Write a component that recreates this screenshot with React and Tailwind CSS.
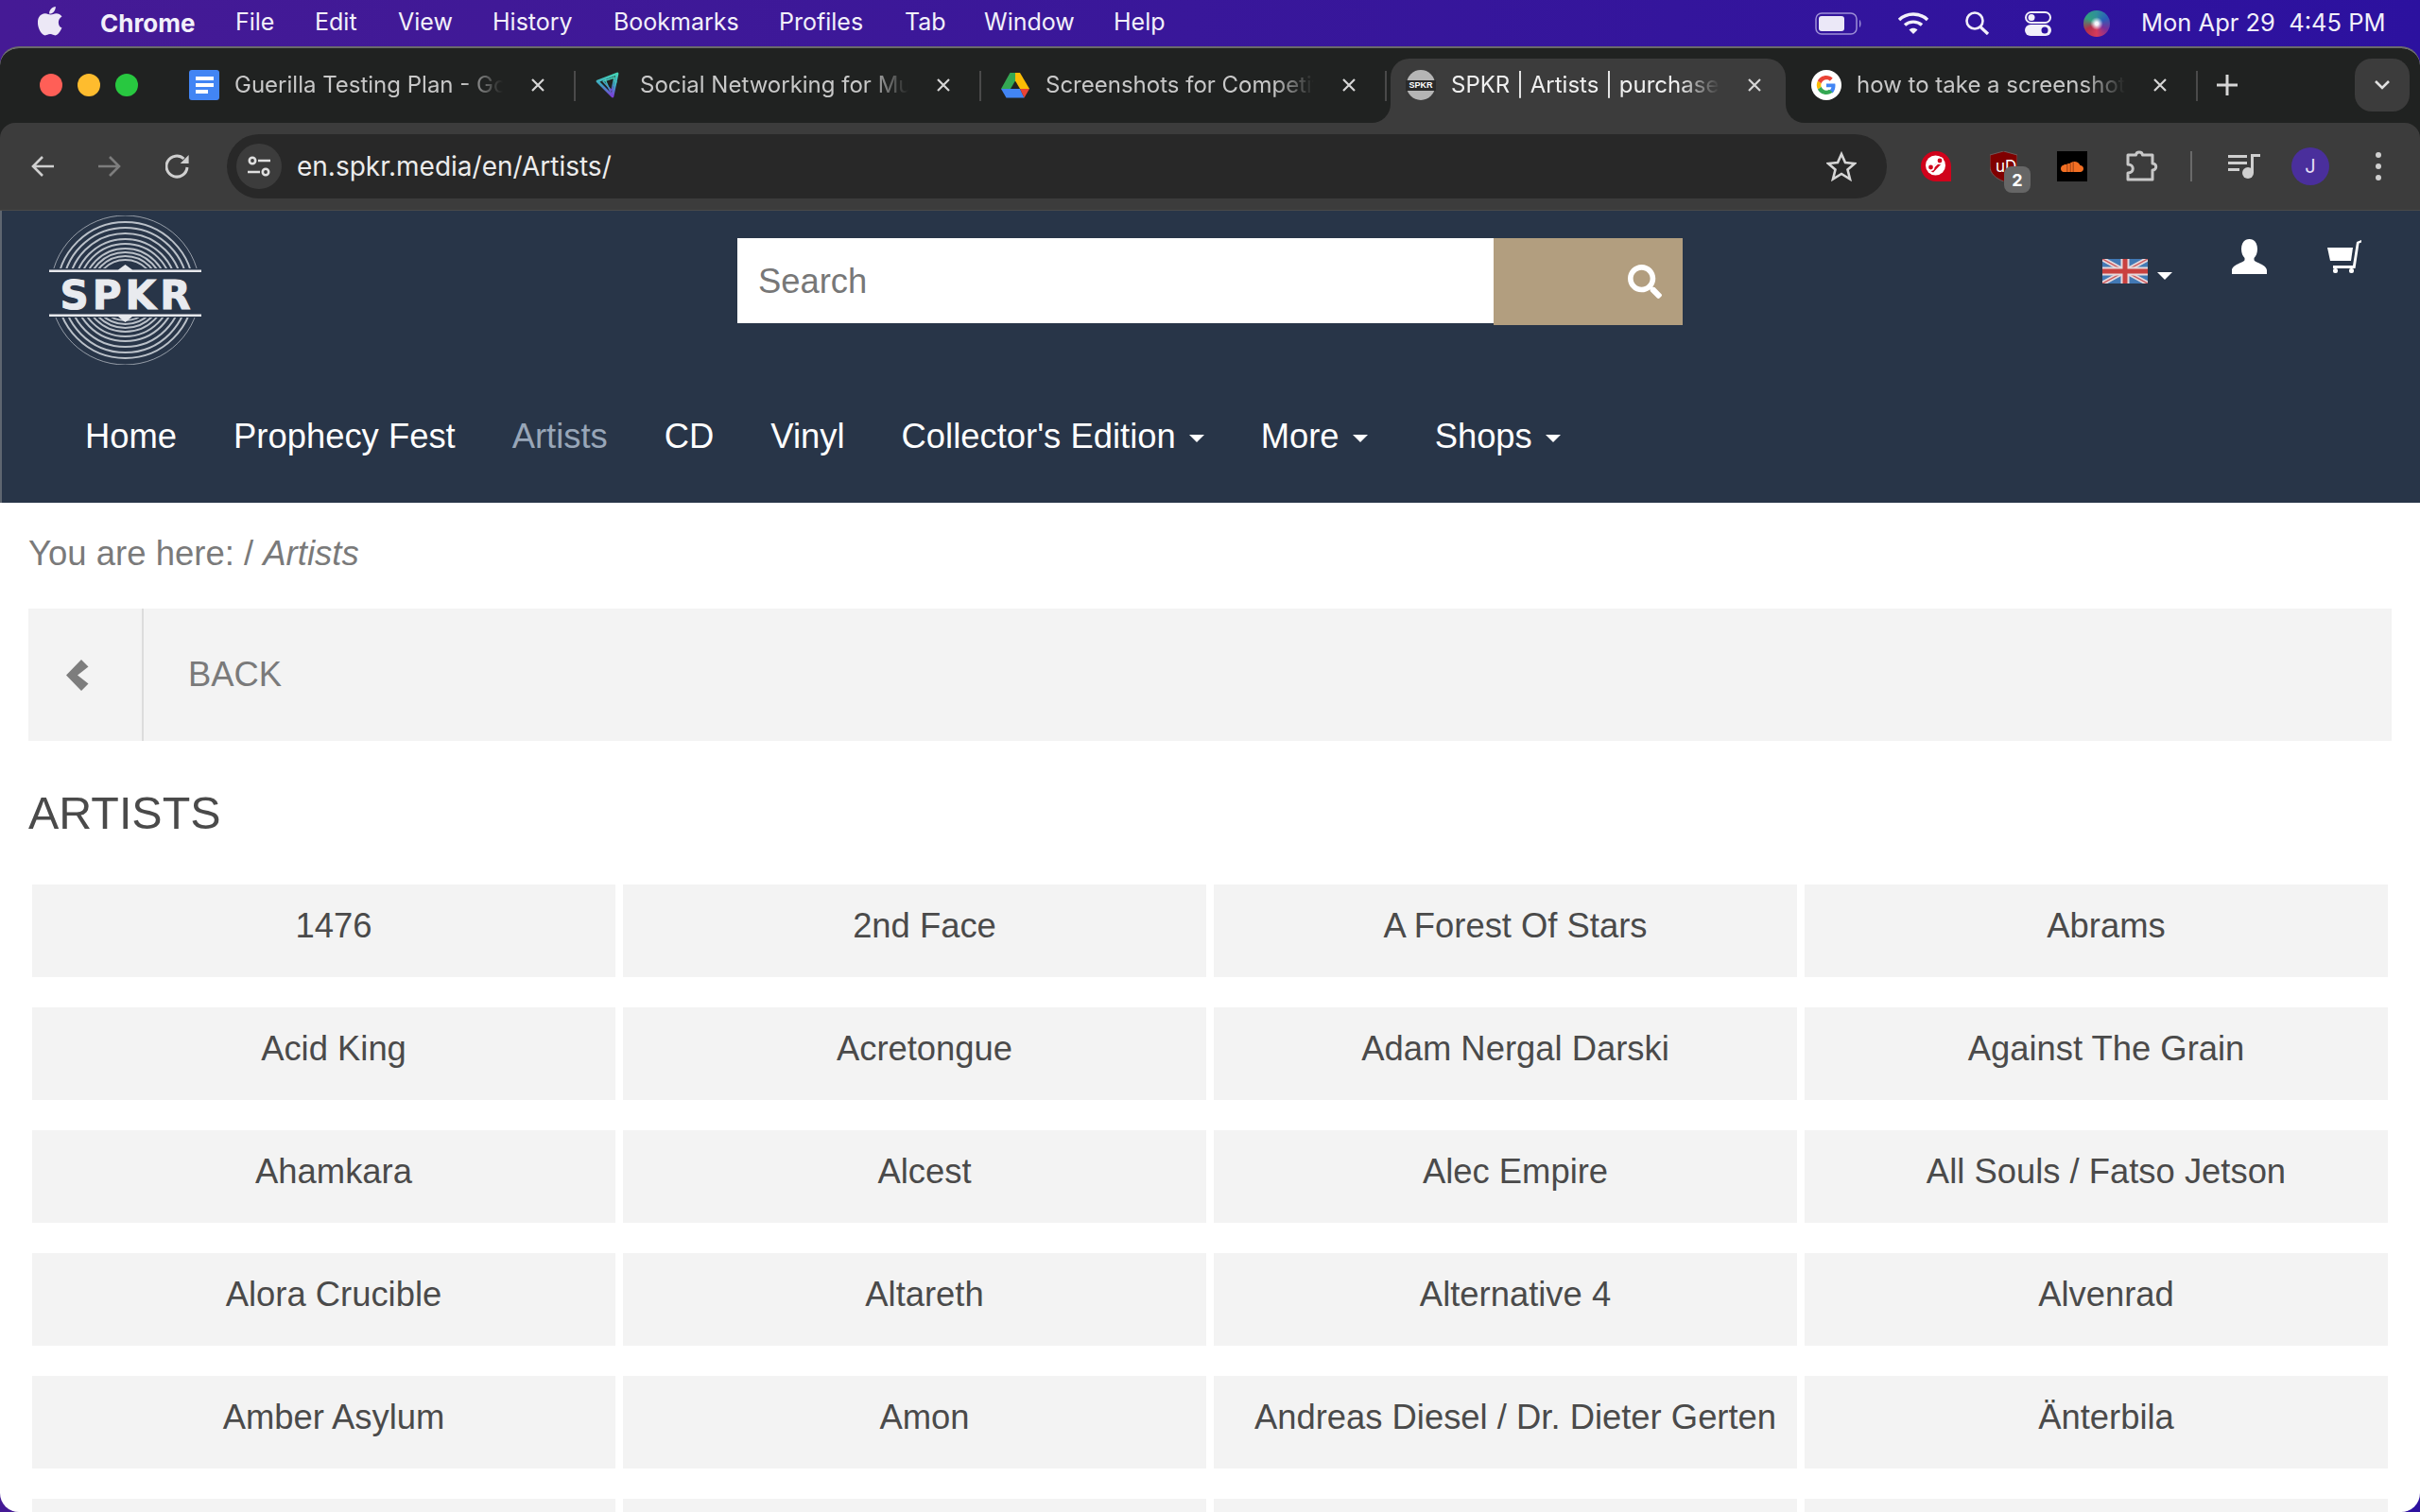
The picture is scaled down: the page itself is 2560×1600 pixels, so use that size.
import React from "react";
import { FaSearch } from "react-icons/fa";

const menuItems = [
  { label: "Chrome", w: 143, bold: true },
  { label: "File", w: 84 },
  { label: "Edit", w: 88 },
  { label: "View", w: 100 },
  { label: "History", w: 128 },
  { label: "Bookmarks", w: 175 },
  { label: "Profiles", w: 133 },
  { label: "Tab", w: 84 },
  { label: "Window", w: 137 },
  { label: "Help", w: 80 },
];

const navItems = [
  { label: "Home" },
  { label: "Prophecy Fest" },
  { label: "Artists", muted: true },
  { label: "CD" },
  { label: "Vinyl" },
  { label: "Collector's Edition", caret: true },
  { label: "More", caret: true },
  { label: "Shops", caret: true, extra: true },
];

const artists = [
  "1476", "2nd Face", "A Forest Of Stars", "Abrams",
  "Acid King", "Acretongue", "Adam Nergal Darski", "Against The Grain",
  "Ahamkara", "Alcest", "Alec Empire", "All Souls / Fatso Jetson",
  "Alora Crucible", "Altareth", "Alternative 4", "Alvenrad",
  "Amber Asylum", "Amon", "Andreas Diesel / Dr. Dieter Gerten", "Änterbila",
  "", "", "", "",
];

function DocsIcon() {
  return (
    <svg width="32" height="32" viewBox="0 0 32 32">
      <rect x="0" y="0" width="32" height="32" rx="3" fill="#4285f4" />
      <rect x="7" y="7" width="19" height="4" fill="#fff" />
      <rect x="7" y="14" width="19" height="4" fill="#fff" />
      <rect x="7" y="21" width="13" height="4" fill="#fff" />
    </svg>
  );
}

function SocialIcon() {
  return (
    <svg width="32" height="32" viewBox="0 0 32 32" fill="none" strokeLinejoin="round">
      <defs>
        <linearGradient id="socialGrad" x1="0" y1="0" x2="0" y2="1">
          <stop offset="0" stopColor="#45d6b5" />
          <stop offset="0.5" stopColor="#3f9fc4" />
          <stop offset="1" stopColor="#7a3fd8" />
        </linearGradient>
      </defs>
      <g stroke="url(#socialGrad)">
        <path d="M3 12 L24 4 L19 28 Z" strokeWidth="2.800" />
        <path d="M9 12 L21 8 L18 22 Z" strokeWidth="1.500" />
        <path d="M11 10 L18 26 M23 12 L18 26" strokeWidth="1.500" />
      </g>
    </svg>
  );
}

function DriveIcon() {
  return (
    <svg width="32" height="32" viewBox="0 0 32 32">
      <path d="M10.500 3 H16 V11.500 L11 20 H1 Z" fill="#34a853" />
      <path d="M16 3 H21 L31 20 H21 L16 11.500 Z" fill="#fbbc04" />
      <path d="M1 20 H21 L25.500 29.500 H6.500 Z" fill="#4285f4" />
      <path d="M21 20 H31 L25.500 29.500 Z" fill="#ea4335" />
    </svg>
  );
}

function SpkrFavicon() {
  return (
    <div className="relative flex h-[32px] w-[32px] items-center justify-center bg-[#3a3a3a]">
      <div className="h-[32px] w-[30px] rounded-full bg-[#b5b5b5]" />
      <span className="absolute w-full bg-[#2a2a2a] text-center text-[9px] leading-[11px] font-bold text-white [font-family:'Liberation_Sans',sans-serif]">
        SPKR
      </span>
    </div>
  );
}

function GoogleIcon() {
  return (
    <svg width="32" height="32" viewBox="0 0 32 32">
      <circle cx="16" cy="16" r="16" fill="#fff" />
      <path d="M25.500 16.500 c0-.8-.1-1.400-.2-2 H16 v3.800 h5.400 c-.2 1.300-1 2.600-2.400 3.400 l3.600 2.700 c2.100-2 2.900-4.800 2.900-7.900 z" fill="#4285f4" />
      <path d="M16 26 c2.800 0 5-.9 6.600-2.500 L19 20.700 c-.8.600-1.800 1-3 1 -2.500 0-4.600-1.700-5.400-4 L6.900 20.500 C8.500 23.800 12 26 16 26 z" fill="#34a853" />
      <path d="M10.600 17.700 c-.4-1.100-.4-2.300 0-3.400 L6.900 11.500 c-1.500 2.900-1.500 6.100 0 9 z" fill="#fbbc04" />
      <path d="M16 10.300 c1.500 0 2.700.5 3.700 1.400 l3-3 C20.900 7 18.700 6 16 6 12 6 8.500 8.200 6.900 11.500 l3.700 2.800 c.8-2.300 2.900-4 5.400-4 z" fill="#ea4335" />
    </svg>
  );
}

const tabs = [
  { title: "Guerilla Testing Plan - Google Docs", icon: <DocsIcon /> },
  { title: "Social Networking for Musicians", icon: <SocialIcon /> },
  { title: "Screenshots for Competitive", icon: <DriveIcon /> },
  { title: "SPKR | Artists | purchase online", icon: <SpkrFavicon />, active: true },
  { title: "how to take a screenshot on mac", icon: <GoogleIcon /> },
];

function CloseIcon() {
  return (
    <svg width="16" height="16" viewBox="0 0 16 16" stroke="#d6d6d6" strokeWidth="2.200" className="shrink-0">
      <path d="M2 2 L14 14 M14 2 L2 14" />
    </svg>
  );
}

function Tab({ tab }) {
  return (
    <div className="relative flex h-[68px] w-[429px] shrink-0 items-start">
      {tab.active && (
        <>
          <div className="absolute top-0 left-0 h-[68px] w-[418px] rounded-t-[20px] bg-[#3c3c3c]" />
          <div className="absolute bottom-0 left-[-20px] h-[20px] w-[20px] bg-[#3c3c3c]">
            <div className="h-full w-full rounded-br-[20px] bg-[#202221]" />
          </div>
          <div className="absolute bottom-0 left-[418px] h-[20px] w-[20px] bg-[#3c3c3c]">
            <div className="h-full w-full rounded-bl-[20px] bg-[#202221]" />
          </div>
        </>
      )}
      <div className="relative flex h-[56px] w-full items-center pl-[16px]">
        <div className="flex h-[32px] w-[32px] shrink-0 items-center justify-center">{tab.icon}</div>
        <span
          className={`ml-[16px] w-[287px] shrink-0 overflow-hidden text-[24px] whitespace-nowrap [mask-image:linear-gradient(to_right,black_84%,transparent_99%)] ${
            tab.active ? "text-[#f0f0f0]" : "text-[#c8c8c8]"
          }`}
        >
          {tab.title}
        </span>
        <div className="ml-[26px]">
          <CloseIcon />
        </div>
        {!tab.active && <div className="absolute top-[13px] left-[423px] h-[32px] w-[2px] bg-[#4a4a4a]" />}
      </div>
    </div>
  );
}

function AppleLogo() {
  return (
    <svg width="26" height="31" viewBox="0 0 26 31" fill="#ece8f6">
      <path d="M18.800 0 c.2 2-.6 3.900-1.700 5.300 -1.200 1.400-3.100 2.500-5 2.300 -.2-1.900.7-3.900 1.800-5.100 C15.100 1.100 17.200.1 18.800 0 z M25.500 22.300 c-.7 1.600-1 2.300-1.900 3.700 -1.300 2-3.100 4.400-5.300 4.400 -2 0-2.500-1.300-5.200-1.300 -2.700 0-3.300 1.300-5.300 1.300 -2.200 0-3.900-2.200-5.200-4.200 C-.5 20.800-.9 14.300 1.300 11 c1.600-2.400 4.100-3.700 6.500-3.700 2.400 0 3.900 1.300 5.900 1.300 1.900 0 3.100-1.300 5.900-1.300 2.100 0 4.300 1.100 5.900 3.100 -5.200 2.900-4.300 10.200-.5 11.900 z" />
    </svg>
  );
}

function StatusIcons() {
  return (
    <div className="flex items-center">
      <svg width="50" height="24" viewBox="0 0 50 24" fill="none">
        <rect x="1" y="1" width="43" height="22" rx="6" stroke="#9d8fd6" strokeWidth="1.500" />
        <rect x="4" y="4" width="27" height="16" rx="3" fill="#ebe8f7" />
        <path d="M47 8 c2 1 2 7 0 8 z" fill="#9d8fd6" />
      </svg>
      <svg width="34" height="24" viewBox="0 0 34 24" fill="none" stroke="#f2f0fa" strokeWidth="3.400" className="ml-[37px]">
        <path d="M2 8 C10 0 24 0 32 8" />
        <path d="M8 13.500 C13 9 21 9 26 13.500" />
        <path d="M17 23 L12.500 18.500 C15 16.300 19 16.300 21.500 18.500 Z" fill="#f2f0fa" stroke="none" />
      </svg>
      <svg width="27" height="25" viewBox="0 0 27 25" fill="none" stroke="#f2f0fa" strokeWidth="2.600" className="ml-[37px]">
        <circle cx="11" cy="10" r="8.500" />
        <path d="M17 16.500 L25 24" strokeWidth="3.200" />
      </svg>
      <svg width="28" height="26" viewBox="0 0 28 26" className="ml-[37px]">
        <rect x="1" y="1" width="26" height="11" rx="5.500" fill="none" stroke="#f2f0fa" strokeWidth="2" />
        <circle cx="7" cy="6.500" r="3.500" fill="#f2f0fa" />
        <rect x="0" y="14" width="28" height="12" rx="6" fill="#f2f0fa" />
        <circle cx="21" cy="20" r="3.500" fill="#2e129f" />
      </svg>
      <div className="ml-[34px] h-[28px] w-[28px] rounded-full bg-[radial-gradient(circle,#f4f6fb_8%,transparent_34%),conic-gradient(#2f8f9a,#2a5fb8,#7a2f9a,#d83a5a,#b0304a,#30a080,#2f8f9a)]" />
    </div>
  );
}

function Toolbar() {
  return (
    <div className="flex h-[92px] items-center rounded-t-[16px] bg-[#3c3c3c]">
      <svg width="24" height="24" viewBox="0 0 24 24" fill="none" stroke="#cfcfcf" strokeWidth="2.600" className="ml-[33px]">
        <path d="M24 12 H3 M12 2 L2 12 L12 22" />
      </svg>
      <svg width="24" height="24" viewBox="0 0 24 24" fill="none" stroke="#7d7d7d" strokeWidth="2.600" className="ml-[47px]">
        <path d="M0 12 H21 M12 2 L22 12 L12 22" />
      </svg>
      <svg width="26" height="26" viewBox="0 0 26 26" fill="none" stroke="#cfcfcf" strokeWidth="3" className="ml-[47px]">
        <path d="M23 14 A11 11 0 1 1 19.500 5" />
        <path d="M24.600 1 V10 H15.700 Z" fill="#cfcfcf" stroke="none" />
      </svg>
      <div className="ml-[39px] flex h-[68px] w-[1756px] items-center rounded-full bg-[#282828] pl-[10px]">
        <div className="flex h-[48px] w-[48px] items-center justify-center rounded-full bg-[#3c3c3c]">
          <svg width="26" height="26" viewBox="0 0 26 26" fill="none" stroke="#e0e0e0" strokeWidth="2.600">
            <circle cx="6" cy="7" r="3.200" />
            <path d="M12 7 H25 M1 19 H14" />
            <circle cx="20" cy="19" r="3.200" />
          </svg>
        </div>
        <span className="ml-[16px] text-[28px] text-[#ececec]">en.spkr.media/en/Artists/</span>
        <svg width="32" height="32" viewBox="0 0 32 32" fill="none" stroke="#d6d6d6" strokeWidth="2.600" className="mr-[32px] ml-auto">
          <path d="M16 3 L20 12 L30 13 L22.500 19.500 L25 29.500 L16 24 L7 29.500 L9.500 19.500 L2 13 L12 12 Z" />
        </svg>
      </div>

      <svg width="32" height="32" viewBox="0 0 32 32" className="ml-[36px]">
        <path d="M16 0 C25 0 32 7 32 16 V32 H16 C7 32 0 25 0 16 C0 7 7 0 16 0 Z" fill="#d0021b" />
        <circle cx="15.500" cy="15" r="10.500" fill="#fff" />
        <path d="M8.500 20 L20 9.500 L23 12 L13 22.500 Z" fill="#d0021b" />
        <path d="M10 20 L20 10.500" stroke="#fff" strokeWidth="2" />
        <circle cx="10.500" cy="17" r="3.200" fill="#d0021b" stroke="#fff" strokeWidth="1.600" />
        <circle cx="20" cy="10" r="3.200" fill="#d0021b" stroke="#fff" strokeWidth="1.600" />
      </svg>
      <div className="relative ml-[41px] h-[32px] w-[29px]">
        <svg width="29" height="32" viewBox="0 0 29 32">
          <path d="M14.500 0 L29 4 V16 C29 24 22 29 14.500 32 C7 29 0 24 0 16 V4 Z" fill="#800000" stroke="#6e5a5a" strokeWidth="1" />
        </svg>
        <span className="absolute top-[7px] left-[6px] text-[17px] leading-[18px] text-white">uD</span>
        <span className="absolute top-[16px] left-[15px] flex h-[28px] w-[28px] items-center justify-center rounded-[8px] bg-[#666] text-[18px] font-bold text-white">
          2
        </span>
      </div>
      <div className="ml-[42px] flex h-[32px] w-[32px] items-center justify-center bg-black">
        <svg width="24" height="11" viewBox="0 0 24 11">
          <path d="M2.500 4 C1 4 0 6 0 7.500 C0 9.500 1.500 11 3 11 H20.500 C22.500 11 24 9.500 24 7.500 C24 5.500 22.500 4 20.500 4 C19.500 1.500 17 0 14.500 0 C12 0 10.500 1 9.500 2 L8 2 L6 3 L4 3 Z" fill="#f26f23" />
          <path d="M6 3 V11 H7.500 V2.500 Z M9.500 2 V11 H11 V1 Z M12.500 .5 V11 H14 V0 Z" fill="#b8511a" />
        </svg>
      </div>
      <svg width="34" height="33" viewBox="0 0 34 33" fill="none" stroke="#c8c8c8" strokeWidth="3" className="mb-[2px] ml-[41px]">
        <path d="M2 5 H10.500 C11 1 17 1 17.500 5 H28 V14 C33 14 33 21 28 21 V31 H2 V24 C9 24 9 15 2 15 Z" strokeLinejoin="round" />
      </svg>
      <div className="ml-[34px] h-[32px] w-[2px] bg-[#6a6a6a]" />
      <svg width="34" height="26" viewBox="0 0 34 26" fill="#cfcfcf" className="ml-[38px]">
        <rect x="0" y="1" width="20" height="3" />
        <rect x="0" y="8" width="20" height="3" />
        <rect x="0" y="15" width="12" height="3" />
        <rect x="24" y="0" width="3" height="20" />
        <rect x="24" y="0" width="10" height="3" />
        <circle cx="21" cy="20" r="6" />
      </svg>
      <div className="ml-[33px] flex h-[40px] w-[40px] items-center justify-center rounded-full bg-[#4a2f9c] text-[20px] text-[#e4def5]">
        J
      </div>
      <div className="ml-[49px] flex flex-col gap-[6px]">
        <div className="h-[6px] w-[6px] rounded-full bg-[#cfcfcf]" />
        <div className="h-[6px] w-[6px] rounded-full bg-[#cfcfcf]" />
        <div className="h-[6px] w-[6px] rounded-full bg-[#cfcfcf]" />
      </div>
    </div>
  );
}

function SpkrLogo() {
  const radii = [79, 72, 66, 60, 54, 49, 44, 40, 36, 32];
  return (
    <svg width="161" height="158" viewBox="0 0 161 158" className="shrink-0">
      <defs>
        <clipPath id="rings">
          <rect x="0" y="0" width="161" height="56" />
          <rect x="0" y="108" width="161" height="50" />
        </clipPath>
      </defs>
      <g clipPath="url(#rings)" fill="none" stroke="#dfe3e8">
        {radii.map((r, i) => (
          <circle key={r} cx="80.500" cy="79" r={r} strokeWidth={i === 0 ? 1 : 2} opacity={i === 0 ? 0.6 : 0.8} />
        ))}
      </g>
      <path d="M0 57.500 H73 L80.500 52 L88 57.500 H161 V60 H0 Z" fill="#e6e8ec" />
      <path d="M0 104.500 H161 V107 H88 L80.500 113 L73 107 H0 Z" fill="#e6e8ec" />
      <text
        x="80.500"
        y="99"
        textAnchor="middle"
        textLength="138"
        lengthAdjust="spacing"
        fontSize="42"
        fontWeight="700"
        fill="#e9ebef"
        stroke="#e9ebef"
        strokeWidth="1"
        fontFamily="'DejaVu Sans', sans-serif"
      >
        SPKR
      </text>
    </svg>
  );
}

function UkFlag() {
  return (
    <svg width="48" height="26" viewBox="0 0 48 26">
      <rect width="48" height="26" fill="#4279b5" />
      <path d="M0 0 L48 26 M48 0 L0 26" stroke="#e6d9dc" strokeWidth="5" />
      <path d="M0 0 L48 26 M48 0 L0 26" stroke="#cf5a5e" strokeWidth="1.500" />
      <path d="M24 0 V26 M0 13 H48" stroke="#e6d9dc" strokeWidth="9" />
      <path d="M24 0 V26 M0 13 H48" stroke="#c9413f" strokeWidth="5" />
    </svg>
  );
}

function UserIcon() {
  return (
    <svg width="37" height="37" viewBox="0 0 37 37" fill="#fff">
      <path d="M18.500 0 C24 0 27 4.500 27 10.500 C27 15 25.500 18 23.500 20 V22 C23.500 24.500 37 27 37 33 V37 H0 V33 C0 27 13.500 24.500 13.500 22 V20 C11.500 18 10 15 10 10.500 C10 4.500 13 0 18.500 0 Z" />
    </svg>
  );
}

function CartIcon() {
  return (
    <svg width="36" height="37" viewBox="0 0 36 37" fill="#fff">
      <path d="M0 9 H27 L25 23 H3 Z" />
      <path d="M6 28 H27 L31 3 L36 1 V3.500 L33.500 4.500 L29.500 31 H6 Z" />
      <rect x="6" y="31" width="5" height="5" rx="2" />
      <rect x="23" y="31" width="5" height="5" rx="2" />
    </svg>
  );
}

function SiteHeader() {
  return (
    <header className="h-[309px] border-l-2 border-[#5f6670] bg-[#283548] [font-family:'Liberation_Sans',Arial,sans-serif]">
      <div className="flex h-[189px] items-start pt-[5px] pl-[50px]">
        <SpkrLogo />
        <div className="mt-[24px] ml-[567px] flex items-start">
          <div className="flex h-[90px] w-[800px] items-center bg-white pt-[2px] pl-[22px] text-[36.4px] text-[#777]">Search</div>
          <div className="flex h-[92px] w-[200px] items-center justify-end bg-[#b29e7f] pr-[22px]">
            <FaSearch size={36} color="#fff" />
          </div>
        </div>
        <div className="mt-[46px] ml-[444px]">
          <UkFlag />
        </div>
        <div className="mt-[60px] ml-[10px] h-0 w-0 border-x-[8px] border-t-[8px] border-x-transparent border-t-white" />
        <div className="mt-[25px] ml-[63px]">
          <UserIcon />
        </div>
        <div className="mt-[25px] ml-[64px]">
          <CartIcon />
        </div>
      </div>
      <nav className="flex h-[100px] items-center pl-[58px] text-[36.4px]">
        {navItems.map((item) => (
          <div
            key={item.label}
            className={`flex items-center px-[30px] whitespace-nowrap ${item.muted ? "text-[#98a6b8]" : "text-white"} ${item.extra ? "ml-[11px]" : ""}`}
          >
            {item.label}
            {item.caret && (
              <span className="mt-[4px] ml-[14px] h-0 w-0 border-x-[8px] border-t-[8px] border-x-transparent border-t-white" />
            )}
          </div>
        ))}
      </nav>
    </header>
  );
}

function ArtistsPage() {
  return (
    <main className="px-[30px] [font-family:'Liberation_Sans',Arial,sans-serif]">
      <p className="pt-[34px] text-[36.5px] leading-[40px] text-[#7a7a7a]">
        You are here: / <em>Artists</em>
      </p>
      <div className="mt-[38px] flex h-[140px] items-center bg-[#f3f3f3]">
        <div className="flex h-full w-[122px] items-center border-r-2 border-[#dcdcdc] pl-[40px]">
          <svg width="24" height="33" viewBox="0 0 24 33" fill="#7d7d7d">
            <path d="M0 16.500 L16 0 L23.500 7.500 L12 16.500 L23.500 25.500 L16 33 Z" />
          </svg>
        </div>
        <span className="ml-[47px] text-[36.4px] text-[#7a7a7a]">BACK</span>
      </div>
      <h1 className="mt-[46px] text-[48.4px] leading-[60px] text-[#4a4a4a]">ARTISTS</h1>
      <div className="mt-[46px] grid grid-cols-4 gap-x-[8px] gap-y-[32px] px-[4px]">
        {artists.map((name, i) => (
          <div key={i} className="flex h-[98px] items-center justify-center bg-[#f3f3f3] pb-[10px] pl-[21px] text-[36.4px] text-[#4a4a4a]">
            {name}
          </div>
        ))}
      </div>
    </main>
  );
}

export default function App() {
  return (
    <div className="h-[1600px] w-[2560px] overflow-hidden bg-gradient-to-r from-[#451a95] to-[#2c119f] [font-family:Inter,Roboto,sans-serif]">
      {/* mac menu bar */}
      <div className="flex h-[49px] items-center text-[#f2f0fa]">
        <div className="mb-[4px] ml-[40px]">
          <AppleLogo />
        </div>
        <div className="ml-[40px] flex text-[25px]">
          {menuItems.map((m) => (
            <span key={m.label} style={{ width: m.w }} className={m.bold ? "text-[26px] font-bold" : ""}>
              {m.label}
            </span>
          ))}
        </div>
        <div className="ml-[662px]">
          <StatusIcons />
        </div>
        <span className="ml-[33px] text-[25.5px] whitespace-nowrap">Mon Apr 29&nbsp; 4:45 PM</span>
      </div>

      {/* browser window */}
      <div className="h-[1551px] overflow-hidden rounded-[20px] border-t-2 border-[#6a6a6a] bg-white">
        <div className="bg-[#202221]">
          <div className="flex h-[79px] items-end">
            <div className="flex h-[68px] w-[184px] shrink-0 items-center pl-[42px]">
              <div className="mb-[12px] flex gap-[16px]">
                <div className="h-[24px] w-[24px] rounded-full bg-[#ff5f57]" />
                <div className="h-[24px] w-[24px] rounded-full bg-[#febc2e]" />
                <div className="h-[24px] w-[24px] rounded-full bg-[#28c840]" />
              </div>
            </div>
            {tabs.map((t) => (
              <Tab key={t.title} tab={t} />
            ))}
            <div className="mb-[12px] ml-[16px] flex h-[56px] items-center">
              <svg width="22" height="22" viewBox="0 0 22 22" stroke="#d6d6d6" strokeWidth="3">
                <path d="M11 0 V22 M0 11 H22" />
              </svg>
            </div>
            <div className="mr-[11px] mb-[12px] ml-auto flex h-[56px] w-[58px] items-center justify-center rounded-[18px] bg-[#3c3c3c]">
              <svg width="18" height="12" viewBox="0 0 18 12" fill="none" stroke="#e0e0e0" strokeWidth="2.600">
                <path d="M2 2 L9 9 L16 2" />
              </svg>
            </div>
          </div>
          <Toolbar />
        </div>
        <div className="h-[1px] bg-[#4a4a4a]" />
        <SiteHeader />
        <ArtistsPage />
      </div>
    </div>
  );
}
